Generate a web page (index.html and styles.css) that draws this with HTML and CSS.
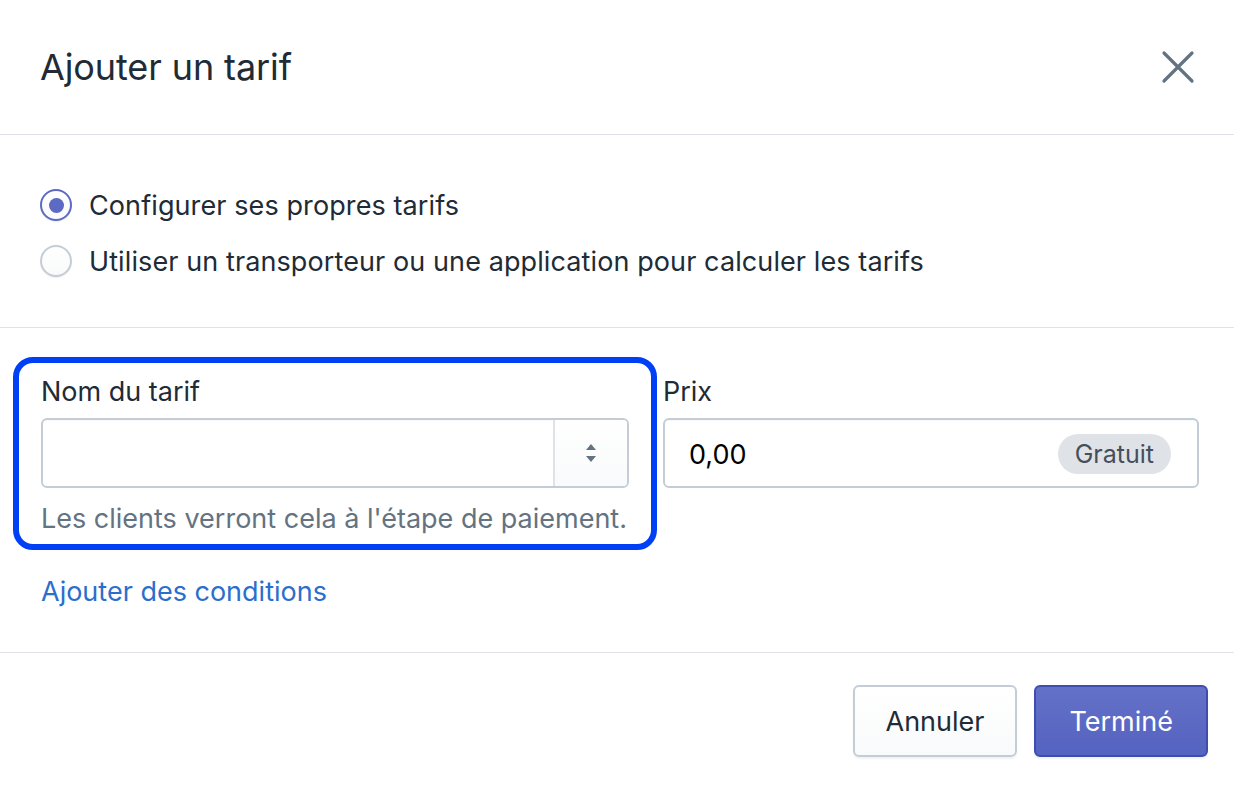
FILE: index.html
```html
<!DOCTYPE html>
<html lang="fr">
<head>
<meta charset="utf-8">
<title>Ajouter un tarif</title>
<link rel="stylesheet" href="styles.css">
</head>
<body>
<div class="modal">
  <header class="modal-header">
    <h1 class="title">Ajouter un tarif</h1>
    <button class="close" aria-label="Fermer">
      <svg width="36" height="36" viewBox="0 0 36 36"><path d="M4 4 L32 32 M32 4 L4 32" stroke="#637381" stroke-width="3.2" stroke-linecap="round" fill="none"/></svg>
    </button>
  </header>
  <section class="section choices">
    <label class="radio-row"><span class="radio checked"><span class="dot"></span></span><span>Configurer ses propres tarifs</span></label>
    <label class="radio-row"><span class="radio"></span><span>Utiliser un transporteur ou une application pour calculer les tarifs</span></label>
  </section>
  <section class="section fields">
    <div class="row">
      <div class="field field-name">
        <div class="label">Nom du tarif</div>
        <div class="input combo">
          <div class="combo-text"></div>
          <div class="combo-arrows">
            <svg width="14" height="24" viewBox="0 0 14 24"><path d="M2 9 L7 3 L12 9 Z M2 15 L12 15 L7 21 Z" fill="#637381"/></svg>
          </div>
        </div>
        <div class="help">Les clients verront cela à l'étape de paiement.</div>
      </div>
      <div class="field field-price">
        <div class="label">Prix</div>
        <div class="input price">
          <span class="value">0,00</span>
          <span class="badge">Gratuit</span>
        </div>
      </div>
    </div>
    <a class="link" href="#">Ajouter des conditions</a>
  </section>
  <footer class="modal-footer">
    <button class="btn">Annuler</button>
    <button class="btn primary">Terminé</button>
  </footer>
</div>
</body>
</html>
```
FILE: styles.css
```css
* { box-sizing: border-box; }
html, body { margin: 0; padding: 0; background: #fff; }
body {
  font-family: "Inter", "Noto Sans", sans-serif;
  color: #212b36;
  width: 1234px;
  height: 786px;
  overflow: hidden;
}
.modal { width: 1234px; height: 786px; background: #fff; }
.modal-header {
  height: 135px;
  border-bottom: 1px solid #dfe3e8;
  display: flex;
  align-items: center;
  justify-content: space-between;
  padding: 0 38px 0 40px;
}
.title { margin: 0; font-size: 36px; font-weight: 400; letter-spacing: -0.1px; }
.close { border: 0; background: none; padding: 0; display: flex; }
.section { border-bottom: 1px solid #dfe3e8; padding: 0 35px 0 40px; }
.choices { padding-top: 42px; padding-bottom: 38px; }
.radio-row {
  display: flex; align-items: center; height: 56px;
  font-size: 27px; gap: 17px; letter-spacing: 0.1px;
}
.radio {
  width: 32px; height: 32px; border-radius: 50%;
  border: 2px solid #c4cdd5;
  background: linear-gradient(#fff, #f9fafb);
  box-shadow: 0 1px 1px rgba(22,29,37,0.08);
  display: flex; align-items: center; justify-content: center;
  flex: none;
}
.radio.checked { border-color: #5c6ac4; }
.dot { width: 15px; height: 15px; border-radius: 50%; background: #5c6ac4; }
.fields { padding-top: 46px; padding-bottom: 42px; padding-left: 41px; }
.row { display: flex; gap: 34px; }
.field { display: flex; flex-direction: column; }
.field-name { width: 588px; position: relative; }
.field-name::before {
  content: "";
  position: absolute;
  left: -28px; right: -28px; top: -17px; bottom: -13px;
  border: 6px solid #0040f5;
  border-radius: 20px;
  pointer-events: none;
}
.field-price { flex: 1; }
.label { font-size: 27px; line-height: 36px; margin-bottom: 8px; }
.input {
  height: 70px;
  border: 2px solid #c4cdd5;
  border-radius: 6px;
  background: #fff;
  box-shadow: inset 0 1px 0 rgba(99,115,129,0.05);
}
.combo { display: flex; }
.combo-text { flex: 1; }
.combo-arrows {
  width: 74px;
  border-left: 2px solid #dfe3e8;
  background: linear-gradient(#fff, #f9fafb);
  display: flex; align-items: center; justify-content: center;
  border-radius: 0 4px 4px 0;
}
.help { font-size: 27px; line-height: 36px; margin-top: 13px; color: #637381; }
.price { display: flex; align-items: center; justify-content: space-between; padding: 2px 26px 0 24px; }
.value { font-size: 27px; color: #000; }
.badge {
  background: #dfe3e8; color: #454f5b;
  font-size: 25px; line-height: 40px; height: 40px;
  padding: 0 17px; border-radius: 20px;
}
.link {
  display: block; margin-top: 37px;
  font-size: 27px; line-height: 36px;
  color: #2c6ecb; text-decoration: none;
}
.modal-footer {
  display: flex; justify-content: flex-end; gap: 17px;
  padding: 32px 26px 0 0;
}
.btn {
  height: 72px;
  font-family: inherit;
  font-size: 27px;
  padding: 0 31px;
  border-radius: 6px;
  border: 2px solid #c4cdd5;
  background: linear-gradient(#fff, #f9fafb);
  color: #212b36;
  box-shadow: 0 2px 2px rgba(22,29,37,0.06);
}
.btn.primary {
  background: linear-gradient(#6371c7, #5563c1);
  border-color: #3f4eae;
  color: #fff;
  padding: 0 33px;
}
```
